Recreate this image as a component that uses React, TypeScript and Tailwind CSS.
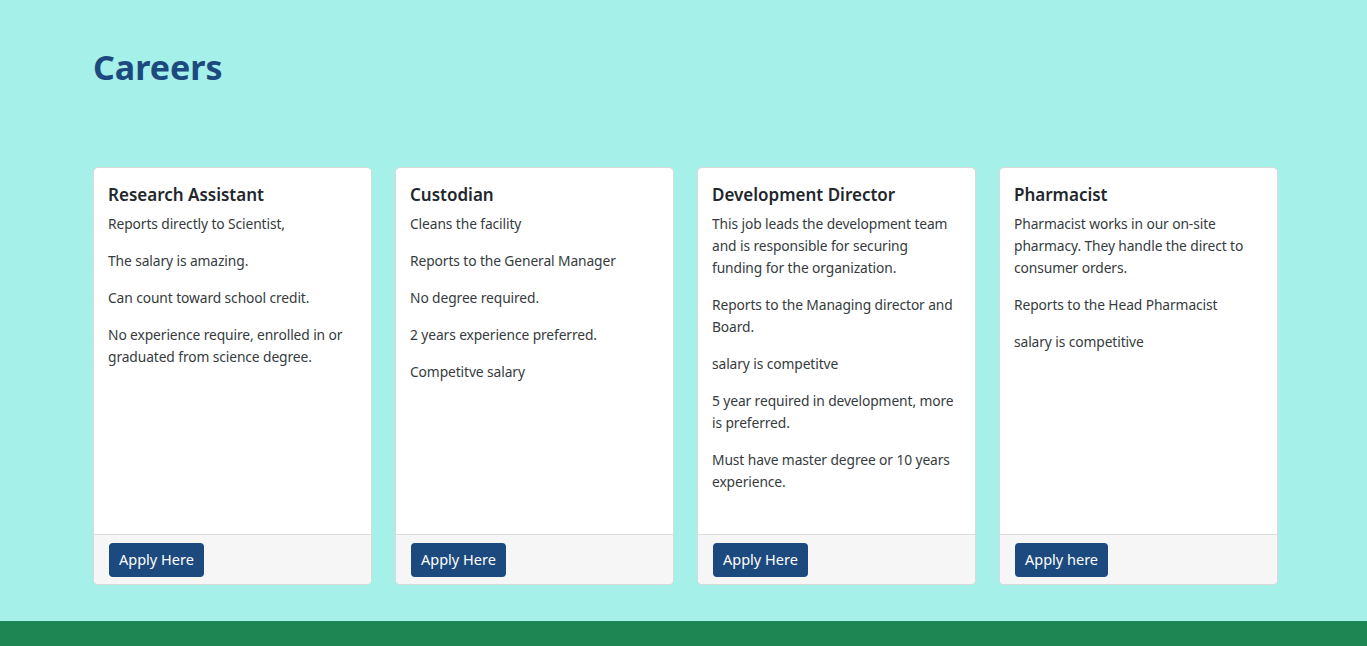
export default function App() {
  const jobs = [
    {
      title: "Research Assistant",
      paras: [
        "Reports directly to Scientist,",
        "The salary is amazing.",
        "Can count toward school credit.",
        "No experience require, enrolled in or graduated from science degree.",
      ],
      btn: "Apply Here",
    },
    {
      title: "Custodian",
      paras: [
        "Cleans the facility",
        "Reports to the General Manager",
        "No degree required.",
        "2 years experience preferred.",
        "Competitve salary",
      ],
      btn: "Apply Here",
    },
    {
      title: "Development Director",
      paras: [
        "This job leads the development team and is responsible for securing funding for the organization.",
        "Reports to the Managing director and Board.",
        "salary is competitve",
        "5 year required in development, more is preferred.",
        "Must have master degree or 10 years experience.",
      ],
      btn: "Apply Here",
    },
    {
      title: "Pharmacist",
      paras: [
        "Pharmacist works in our on-site pharmacy. They handle the direct to consumer orders.",
        "Reports to the Head Pharmacist",
        "salary is competitive",
      ],
      btn: "Apply here",
    },
  ];
  return (
    <div
      className="min-h-[646px] bg-[#a5f0e8] flex flex-col"
      style={{ fontFamily: '"Noto Sans", "Open Sans", sans-serif' }}
    >
      <div className="pl-[93px] pr-[90px] flex-1">
        <h1 className="text-[34px] font-bold text-[#1d4a7e] pt-[40px] leading-[54px]">Careers</h1>
        <div className="mt-[73px] grid grid-cols-4 gap-x-[23px] w-[1185px]">
          {jobs.map((j) => (
            <div
              key={j.title}
              className="bg-white border border-[#d9d9d9] rounded-[5px] flex flex-col h-[418px] overflow-hidden"
            >
              <div className="flex-1 px-[14px] pt-[15px] text-[#363b40]">
                <h5 className="text-[17px] font-semibold leading-[24px] text-[#22272c] mb-[6px]">{j.title}</h5>
                {j.paras.map((p, i) => (
                  <p key={i} className="text-[13.8px] leading-[22px] mb-[15px] tracking-[-0.1px]">
                    {p}
                  </p>
                ))}
              </div>
              <div className="h-[50px] bg-[#f6f6f6] border-t border-[#dcdcdc] pl-[15px] pr-[14px] flex items-center">
                <button className="h-[34px] px-[10px] rounded-[4px] bg-[#1d4a7e] text-white text-[14.5px]">
                  {j.btn}
                </button>
              </div>
            </div>
          ))}
        </div>
      </div>
      <div className="h-[25px] bg-[#1e8652] mt-[35px]" />
    </div>
  );
}
